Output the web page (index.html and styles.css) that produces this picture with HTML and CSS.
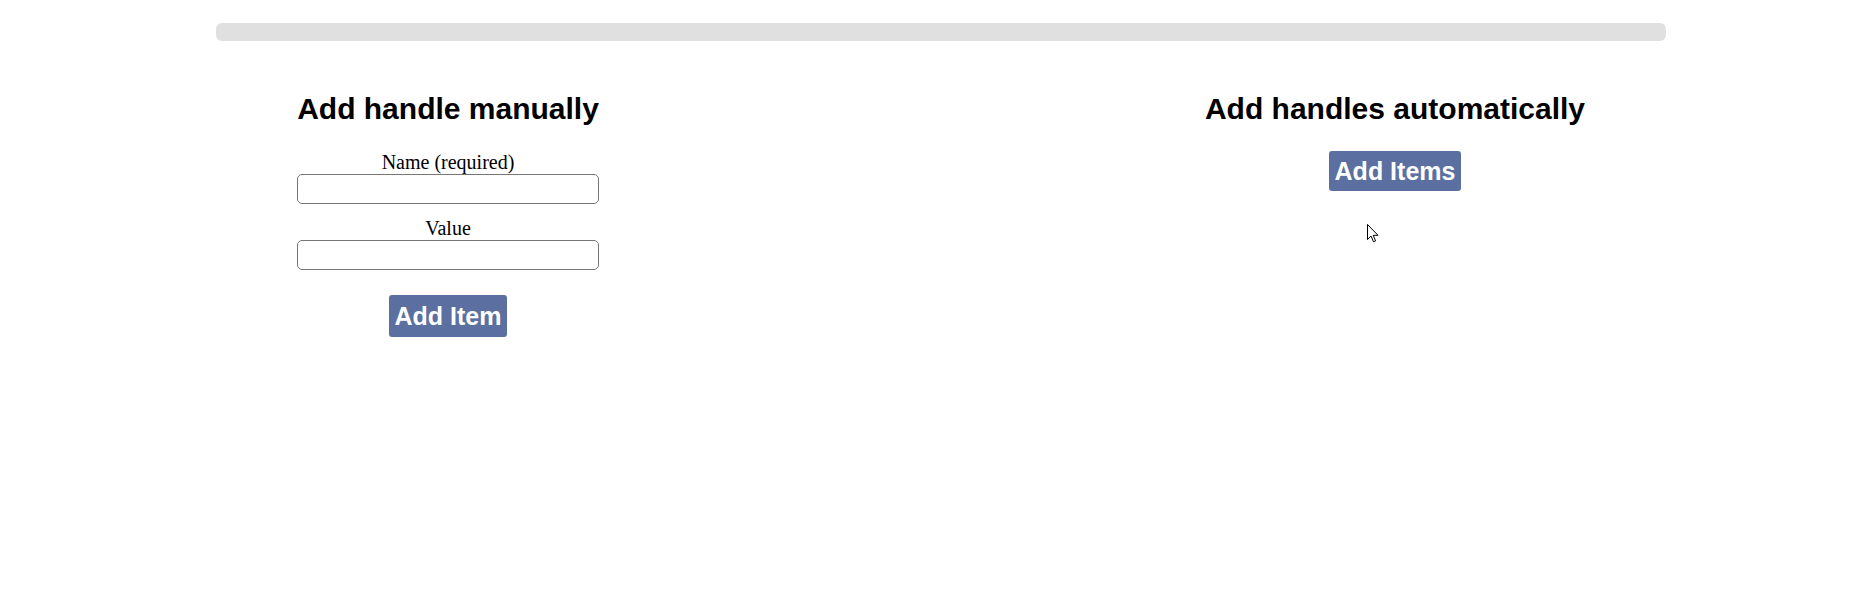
FILE: index.html
```html
<!DOCTYPE html>
<html>
<head>
<meta charset="utf-8">
<link rel="stylesheet" href="styles.css">
</head>
<body>
<div class="progress"></div>
<div class="columns">
  <section class="col col-left">
    <h2 class="title">Add handle manually</h2>
    <label class="field-label" for="name">Name (required)</label>
    <input class="field" id="name" type="text">
    <label class="field-label second" for="value">Value</label>
    <input class="field" id="value" type="text">
    <button class="btn btn-single">Add Item</button>
  </section>
  <section class="col col-right">
    <h2 class="title">Add handles automatically</h2>
    <button class="btn btn-multi">Add Items</button>
  </section>
</div>
<svg class="cursor" width="12" height="19" viewBox="0 0 12 19">
  <path d="M0.5 0.5 L0.5 15.5 L4 12 L6.5 17.8 L8.6 16.9 L6.2 11.3 L11 11.3 Z" fill="#fff" stroke="#000" stroke-width="1" stroke-linejoin="round"/>
</svg>
</body>
</html>
```

FILE: styles.css
```css
html, body {
  margin: 0;
  padding: 0;
  background: #ffffff;
}

body {
  position: relative;
  width: 1862px;
  height: 608px;
  overflow: hidden;
  font-family: "Liberation Serif", "Times New Roman", serif;
}

.progress {
  margin: 23px 196px 0 216px;
  height: 18px;
  border-radius: 6px;
  background: #e0e0e0;
}

.columns {
  display: flex;
  margin-top: 51px;
  gap: 32px;
}

.col {
  display: flex;
  flex-direction: column;
  align-items: center;
}

.col-left {
  width: 896px;
}

.col-right {
  width: 934px;
}

.title {
  margin: 0 0 25px 0;
  font-family: "Liberation Sans", Arial, sans-serif;
  font-weight: bold;
  font-size: 30px;
  line-height: 34px;
  color: #000;
}

.field-label {
  display: block;
  font-size: 20px;
  line-height: 23px;
  color: #000;
}

.field-label.second {
  margin-top: 13px;
}

.field {
  box-sizing: border-box;
  width: 302px;
  height: 30px;
  margin: 0;
  border: 1px solid #767676;
  border-radius: 5px;
  background: #fff;
}

.btn {
  box-sizing: border-box;
  margin: 0;
  padding: 0 6px;
  border: none;
  border-radius: 3px;
  background: #5b70a1;
  color: #ffffff;
  font-family: "Liberation Sans", Arial, sans-serif;
  font-weight: bold;
  font-size: 25px;
}

.btn-single {
  margin-top: 25px;
  height: 42px;
  line-height: 42px;
}

.btn-multi {
  height: 40px;
  line-height: 40px;
}

.cursor {
  position: absolute;
  left: 1367px;
  top: 224px;
}
```
